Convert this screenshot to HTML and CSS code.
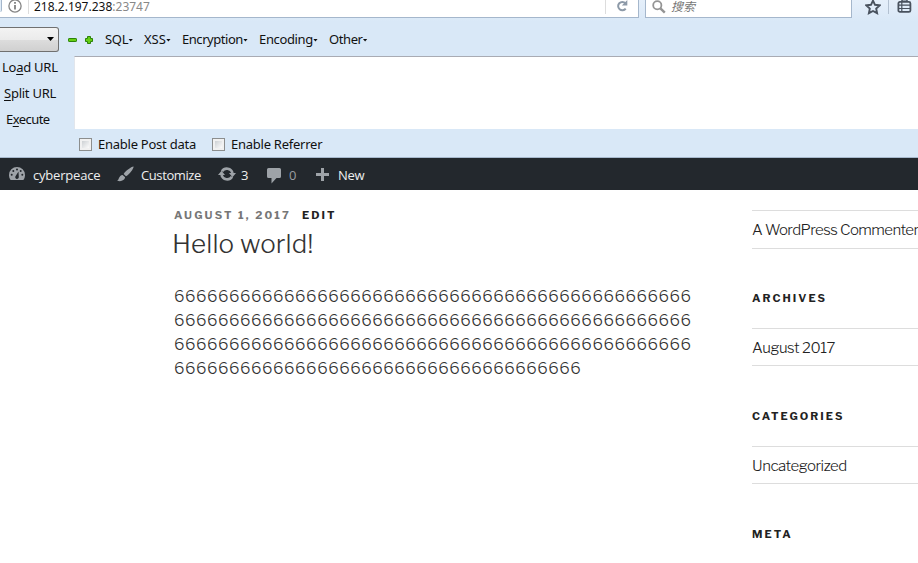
FILE: index.html
```
<!DOCTYPE html>
<html lang="en">
<head>
<meta charset="utf-8">
<title>Hello world!</title>
<link rel="stylesheet" href="styles.css">
</head>
<body>
<header class="chrome">
  <div class="navbar">
    <div class="address">
      <span class="back-edge"></span>
      <svg class="info" viewBox="0 0 14 14"><circle cx="7" cy="7" r="6.1" fill="none" stroke="#858585" stroke-width="1.3"/><path d="M7 6v4.6M7 3.1v1.7" stroke="#808080" stroke-width="1.8"/></svg>
      <span class="host">218.2.197.238<span class="port">:23747</span></span>
      <span class="reload"><svg width="12" height="14" viewBox="0 0 12 14"><path d="M9.4 4.2A4.2 4.2 0 1 0 9.7 9.6" fill="none" stroke="#8d9aa8" stroke-width="2"/><path d="M11.3 1v5.6H5.8z" fill="#8d9aa8"/></svg></span>
    </div>
    <div class="search">
      <svg width="14" height="14" viewBox="0 0 14 14"><circle cx="5.3" cy="5.2" r="4.1" fill="none" stroke="#949494" stroke-width="1.8"/><path d="M8.4 8.3l4.4 4.3" stroke="#949494" stroke-width="2.4"/></svg>
      <span class="hint">搜索</span>
    </div>
    <div class="tools">
      <svg class="star" viewBox="0 0 16 16"><path d="M8 1.6l2 4.2 4.6.6-3.4 3.2.9 4.6L8 12l-4.1 2.2.9-4.6L1.4 6.400l4.600-.6z" fill="none" stroke="#49525e" stroke-width="1.9"/></svg>
      <span class="divider"></span>
      <svg class="list" viewBox="0 0 15 15"><path d="M5 2.200V.8h5v1.400" fill="none" stroke="#49525e" stroke-width="1.500"/><rect x="1.400" y="2.900" width="12" height="10" rx="1.500" fill="none" stroke="#49525e" stroke-width="1.800"/><path d="M2 6.200h11M2 9.500h11M4.800 3v10" stroke="#49525e" stroke-width="1.200"/></svg>
    </div>
  </div>
  <div class="menus">
    <span class="select"></span>
    <svg class="minus" viewBox="0 0 9 4"><rect x=".5" y=".5" width="8" height="3" rx=".6" fill="#65cf12" stroke="#2b8309"/></svg>
    <svg class="plus" viewBox="0 0 8 8"><path d="M2.500.5h3v2h2v3h-2v2h-3v-2h-2v-3h2z" fill="#65cf12" stroke="#2b8309"/></svg>
    <span class="menu sql">SQL</span>
    <span class="menu xss">XSS</span>
    <span class="menu encryption">Encryption</span>
    <span class="menu encoding">Encoding</span>
    <span class="menu other">Other</span>
  </div>
  <div class="hackbar">
    <div class="actions">
      <span class="load">Lo<u>a</u>d URL</span>
      <span class="split"><u>S</u>plit URL</span>
      <span class="exec">E<u>x</u>ecute</span>
    </div>
    <div class="panel">
      <div class="field"></div>
      <div class="checks">
        <span class="box"></span><span class="post">Enable Post data</span>
        <span class="box"></span><span class="referrer">Enable Referrer</span>
      </div>
    </div>
  </div>
</header>
<nav class="admin">
  <svg class="dash" viewBox="0 0 16 14"><path d="M1.600 13A8 8 0 0 1 0 8a8 8 0 0 1 16 0 8 8 0 0 1-1.600 5z" fill="#9ea3a8"/><g fill="#23282d"><circle cx="8" cy="2.600" r="1"/><circle cx="4.300" cy="4" r="1"/><circle cx="11.700" cy="4" r="1"/><circle cx="2.700" cy="7.800" r="1"/><circle cx="13.300" cy="7.800" r="1"/><path d="M9.500 4.500L9.800 10a1.800 1.800 0 1 1-3.300-.8z"/></g></svg>
  <span class="site">cyberpeace</span>
  <svg class="brush" viewBox="0 0 18 16"><path d="M17.500 0c.5 2-4 8-8 10.500L7 8C9 4.500 15 .3 17.500 0zM6 9l2.600 2.500C8 15 4 16.500 0 15c2.500-.5 1.500-5.500 6-6z" fill="#9ea3a8"/></svg>
  <span class="customize">Customize</span>
  <svg class="update" viewBox="0 0 18 14"><path d="M4 4.300A5.800 5.800 0 0 1 14.500 6M14 9.700A5.800 5.800 0 0 1 3.500 8" fill="none" stroke="#9ea3a8" stroke-width="2.600"/><path d="M11 6h7l-3.500 4.200zM0 8h7L3.500 3.800z" fill="#9ea3a8"/></svg>
  <span class="count">3</span>
  <svg class="bubble" viewBox="0 0 14 16"><path d="M1.500 0h11Q14 0 14 1.500v7Q14 10 12.500 10H9.500l-5 5.500V10h-3Q0 10 0 8.500v-7Q0 0 1.500 0z" fill="#9ea3a8"/></svg>
  <span class="zero">0</span>
  <svg class="add" viewBox="0 0 13 13"><path d="M6.500 0v13M0 6.500h13" stroke="#9ea3a8" stroke-width="3"/></svg>
  <span class="new">New</span>
</nav>
<main class="page">
  <article>
    <div class="meta"><span class="date">August 1, 2017</span><span class="edit">Edit</span></div>
    <h1>Hello world!</h1>
    <p class="body">6666666666666666666666666666666666666666666666666666666666666666666666666666666666666666666666666666666666666666666666666666666666666666666666666666666666666666666666666666666666</p>
  </article>
  <aside>
    <div class="entry first"><span class="t-commenter">A WordPress Commenter</span></div>
    <h2 class="h-archives">Archives</h2>
    <div class="entry"><span class="t-august">August 2017</span></div>
    <h2 class="h-categories">Categories</h2>
    <div class="entry"><span class="t-uncat">Uncategorized</span></div>
    <h2 class="h-meta">Meta</h2>
  </aside>
</main>
</body>
</html>
```
FILE: styles.css
```
* { box-sizing: border-box; }
body { margin: 0; width: 918px; height: 563px; overflow: hidden; background: #fff; font-family: "Libre Franklin", Inter, "Liberation Sans", sans-serif; }
svg { display: block; flex: none; }
span { white-space: nowrap; }

.chrome { height: 158px; background: #d9e8f7; border-bottom: 1px solid #a7b9cd; font: 13px/18px "Noto Sans", sans-serif; color: #111; }
.navbar { display: flex; height: 27px; background: linear-gradient(#e5effa, #d9e8f7 22px); }
.address { display: flex; width: 639px; height: 18px; background: #fff; border: solid #a5b7cc; border-width: 0 1px 1px 0; }
.back-edge { width: 2px; height: 12px; border-right: 1px solid #a5b7cc; border-radius: 0 0 4px 0; background: #e0ecf8; }
.info { width: 14px; height: 14px; margin: -1px 0 0 6px; }
.host { flex: none; width: 577px; height: 14px; margin-left: 6px; padding-left: 5px; border-left: 1px solid #ddd; line-height: 13px; font-size: 12px; }
.port { color: #888; }
.reload { flex: none; width: 33px; height: 14px; padding-left: 10px; border-left: 1px solid #ddd; }
.reload svg { margin-top: -1px; }
.search { display: flex; width: 207px; height: 18px; margin-left: 6px; padding-left: 6px; background: #fff; border: solid #a5b7cc; border-width: 0 1px 1px; }
.hint { margin: -1px 0 0 5px; color: #777; font: italic 12px/14px "Noto Sans CJK SC", sans-serif; }
.tools { display: flex; padding-left: 13px; }
.star { width: 16px; height: 16px; margin-top: -1px; }
.divider { width: 1px; height: 14px; margin-left: 7px; background: #b3c1d1; }
.list { width: 15px; height: 15px; margin: -1px 0 0 8px; }

.menus { display: flex; align-items: flex-start; height: 29px; }
.select { width: 59px; height: 25px; border: 1px solid #707070; border-left: 0; border-radius: 0 3px 3px 0; background: linear-gradient(#f3f3f3, #ebebeb 50%, #dddddd 50%, #d0d0d0); display: flex; justify-content: flex-end; padding: 9px 4px 0 0; }
.select::after { content: ""; width: 7px; height: 4px; background: #000; clip-path: polygon(0 0, 100% 0, 50% 100%); }
.minus { width: 9px; height: 4px; margin: 11px 0 0 9px; }
.plus { width: 8px; height: 8px; margin: 9px 12px 0 8px; }
.menu { display: flex; align-items: center; margin-top: 3px; }
.menu::after { content: ""; width: 5px; height: 3px; margin-top: 2px; background: #111; clip-path: polygon(0 0, 100% 0, 50% 100%); }
.sql { width: 39px; letter-spacing: -.3px; }
.xss { width: 38px; }
.encryption { width: 77px; letter-spacing: -.45px; }
.encoding { width: 70px; letter-spacing: -.35px; }
.other { letter-spacing: -.4px; }

.hackbar { display: flex; height: 101px; }
.actions { display: flex; flex-direction: column; gap: 8px; width: 74px; padding: 2px 0 0 2px; letter-spacing: -.25px; }
.split { margin-left: 2px; }
.exec { margin-left: 4px; letter-spacing: -.55px; }
.actions u { text-underline-offset: 2px; text-decoration-thickness: 1px; }
.panel { flex: 1; }
.field { height: 73px; background: #fff; border-top: 1px solid #a9abb3; border-left: 1px solid #e2e6ec; }
.checks { display: flex; align-items: center; height: 27px; padding: 3px 0 0 5px; letter-spacing: -.25px; }
.box { width: 13px; height: 13px; margin: 1px 6px 0 0; border: 1px solid #8c8e8e; background: linear-gradient(135deg, #bfc4c8, #fafafa 80%); box-shadow: inset 0 0 0 2px #f1f1f1; }
.post { width: 114px; }

.admin { display: flex; align-items: center; height: 32px; padding: 2px 0 0 9px; background: #23282d; color: #eee; font: 13px/18px "Open Sans", sans-serif; }
.dash { width: 16px; height: 14px; margin: -3px 8px 0 0; }
.site { width: 84px; letter-spacing: -.2px; }
.brush { width: 17px; height: 16px; margin: -3px 7px 0 0; }
.customize { width: 77px; letter-spacing: -.4px; }
.update { width: 18px; height: 14px; margin: -2px 5px 0 0; }
.count { width: 26px; }
.bubble { width: 14px; height: 16px; margin: 1px 8px 0 0; }
.zero { width: 27px; color: #999da1; }
.add { width: 13px; height: 13px; margin: -2px 9px 0 0; }
.new { letter-spacing: -.3px; }

.page { display: flex; color: #222; }
article { flex: none; width: 752px; padding: 16px 0 0 174px; }
.meta { display: flex; height: 18px; font: 700 11px/18px "Libre Franklin", "Liberation Sans", sans-serif; text-transform: uppercase; letter-spacing: 2px; }
.date { width: 128px; color: #767676; letter-spacing: 2.15px; }
h1 { margin: 3px 0 0 -2px; font-size: 26px; line-height: 34px; font-weight: 300; letter-spacing: .1px; color: #333; }
.body { width: 518px; margin: 24px 0 0; font-size: 16px; line-height: 24px; font-weight: 300; color: #333; word-break: break-all; letter-spacing: .53px; }
aside { flex: none; width: 166px; padding-top: 20px; }
.entry { height: 38px; border: solid #ddd; border-width: 1px 0; font-size: 15px; line-height: 38px; font-weight: 300; letter-spacing: -.46px; color: #222; }
.first { height: 39px; line-height: 39px; }
.t-commenter { letter-spacing: -.56px; }
h2 { margin: 0; height: 80px; padding-top: 41px; font: 700 11px/18px "Libre Franklin", "Liberation Sans", sans-serif; letter-spacing: 2.05px; text-transform: uppercase; }
.h-archives { height: 79px; padding-top: 40px; }
```
